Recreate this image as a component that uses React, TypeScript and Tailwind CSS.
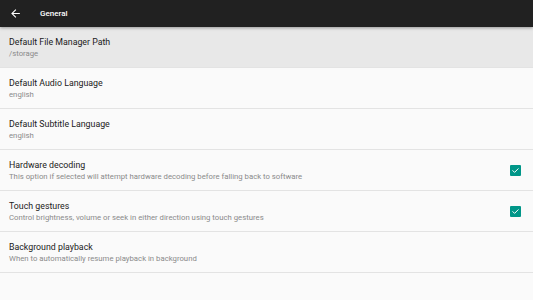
import React from "react";

const PREFS = [
  { title: "Default File Manager Path", summary: "/storage", active: true },
  { title: "Default Audio Language", summary: "english" },
  { title: "Default Subtitle Language", summary: "english" },
  {
    title: "Hardware decoding",
    summary:
      "This option if selected will attempt hardware decoding before falling back to software",
    checked: true,
  },
  {
    title: "Touch gestures",
    summary:
      "Control brightness, volume or seek in either direction using touch gestures",
    checked: true,
  },
  {
    title: "Background playback",
    summary: "When to automatically resume playback in background",
  },
];

function CheckBox() {
  return (
    <div className="w-[11px] h-[11px] rounded-[1px] bg-[#009688] flex items-center justify-center">
      <svg viewBox="0 0 24 24" className="w-[9px] h-[9px]" fill="none">
        <path
          d="M5 12.5l4.5 4.5L19 7.5"
          stroke="white"
          strokeWidth="2.6"
          strokeLinecap="square"
        />
      </svg>
    </div>
  );
}

export default function App() {
  return (
    <div
      className="w-[533px] h-[300px] bg-[#fafafa] overflow-hidden flex flex-col antialiased"
      style={{ fontFamily: "Roboto, 'Liberation Sans', sans-serif" }}
    >
      {/* Toolbar */}
      <div className="relative z-10 h-[27px] bg-[#212121] flex items-center shadow-[0_1px_3px_rgba(0,0,0,0.35)]">
        <svg viewBox="0 0 24 24" className="w-[13px] h-[13px] ml-[9px]" fill="white">
          <path d="M20 11H7.83l5.59-5.59L12 4l-8 8 8 8 1.41-1.41L7.83 13H20v-2z" />
        </svg>
        <span className="ml-[18px] text-[8px] font-medium text-white">
          General
        </span>
      </div>

      {/* Preference list */}
      <div className="flex flex-col">
        {PREFS.map((p, idx) => (
          <div
            key={idx}
            className={`h-[41px] flex items-center pl-[9px] pr-[12px] border-b border-[#e3e3e3] ${
              p.active ? "bg-[#e8e8e8]" : ""
            }`}
          >
            <div className="flex-1 flex flex-col">
              <span className="text-[8.8px] leading-[12px] text-[#212121]">
                {p.title}
              </span>
              <span className="text-[7.75px] leading-[11px] text-[#8a8a8a]">
                {p.summary}
              </span>
            </div>
            {p.checked && <CheckBox />}
          </div>
        ))}
      </div>
    </div>
  );
}
